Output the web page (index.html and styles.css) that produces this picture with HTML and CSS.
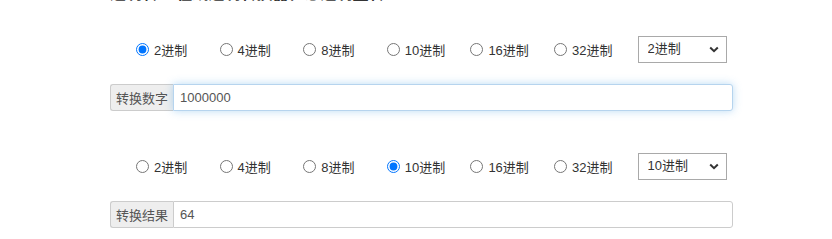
FILE: index.html
```html
<!DOCTYPE html>
<html lang="zh-CN">
<head>
    <meta charset="UTF-8">
    <title>进制转换</title>
    <link rel="stylesheet" href="styles.css">
</head>
<body>
    <div class="tool">
        <h3 class="title">进制转 <span class="gap"></span>在线进制转换器任意进制互转</h3>

        <div class="radio-row">
            <label class="radio"><input type="radio" name="from" checked>2进制</label>
            <label class="radio"><input type="radio" name="from">4进制</label>
            <label class="radio"><input type="radio" name="from">8进制</label>
            <label class="radio"><input type="radio" name="from">10进制</label>
            <label class="radio"><input type="radio" name="from">16进制</label>
            <label class="radio"><input type="radio" name="from">32进制</label>
            <span class="select-wrap">
                <select>
                    <option selected>2进制</option>
                    <option>10进制</option>
                </select>
                <svg class="chev" width="10" height="7" viewBox="0 0 10 7"><path d="M1.2 1.5 5 5.2 8.8 1.5" fill="none" stroke="#333" stroke-width="2"/></svg>
            </span>
        </div>
        <div class="input-group">
            <span class="addon">转换数字</span>
            <input type="text" class="field focus" value="1000000">
        </div>

        <div class="radio-row second">
            <label class="radio"><input type="radio" name="to">2进制</label>
            <label class="radio"><input type="radio" name="to">4进制</label>
            <label class="radio"><input type="radio" name="to">8进制</label>
            <label class="radio"><input type="radio" name="to" checked>10进制</label>
            <label class="radio"><input type="radio" name="to">16进制</label>
            <label class="radio"><input type="radio" name="to">32进制</label>
            <span class="select-wrap">
                <select>
                    <option>2进制</option>
                    <option selected>10进制</option>
                </select>
                <svg class="chev" width="10" height="7" viewBox="0 0 10 7"><path d="M1.2 1.5 5 5.2 8.8 1.5" fill="none" stroke="#333" stroke-width="2"/></svg>
            </span>
        </div>
        <div class="input-group">
            <span class="addon">转换结果</span>
            <input type="text" class="field" value="64">
        </div>
    </div>
</body>
</html>
```

FILE: styles.css
```css
body {
    margin: 0;
    background: #fff;
    color: #333;
    font-family: "Liberation Sans", "Noto Sans CJK SC", sans-serif;
    font-size: 13px;
}
.tool {
    margin-left: 110px;
    width: 623px;
}
.title {
    margin: -14px 0 0 0;
    height: 16px;
    line-height: 16px;
    font-size: 16px;
    color: #333;
    white-space: nowrap;
}
.title .gap {
    display: inline-block;
    width: 14px;
}
.radio-row {
    display: flex;
    align-items: center;
    height: 27px;
    margin-top: 34px;
    padding-left: 26px;
}
.radio-row.second {
    margin-top: 42px;
}
.radio {
    display: flex;
    align-items: center;
    width: 83.6px;
    flex-shrink: 0;
    color: #333;
}
.radio input {
    margin: 0 5px 0 0;
    width: 13px;
    height: 13px;
}
.select-wrap {
    position: relative;
    display: inline-block;
}
.select-wrap select {
    appearance: none;
    -webkit-appearance: none;
    width: 89px;
    height: 27px;
    padding: 0 0 2px 9px;
    border: 1px solid #a9a9a9;
    border-radius: 0;
    background: #fff;
    color: #333;
    font-family: inherit;
    font-size: 13px;
}
.select-wrap .chev {
    position: absolute;
    right: 8px;
    top: 10px;
    pointer-events: none;
}
.input-group {
    display: flex;
    height: 27px;
    margin-top: 21px;
}
.addon {
    display: flex;
    align-items: center;
    padding: 0 5px;
    background: #eee;
    border: 1px solid #ccc;
    border-right: 0;
    border-radius: 3px 0 0 3px;
    color: #555;
    white-space: nowrap;
}
.field {
    flex: 1;
    box-sizing: border-box;
    height: 27px;
    margin: 0;
    padding: 0 6px;
    border: 1px solid #ccc;
    border-radius: 0 3px 3px 0;
    color: #555;
    font-family: inherit;
    font-size: 13px;
    outline: none;
}
.field.focus {
    border-color: #b6d4ee;
    box-shadow: 0 0 8px rgba(102, 175, 233, 0.45);
}
```
